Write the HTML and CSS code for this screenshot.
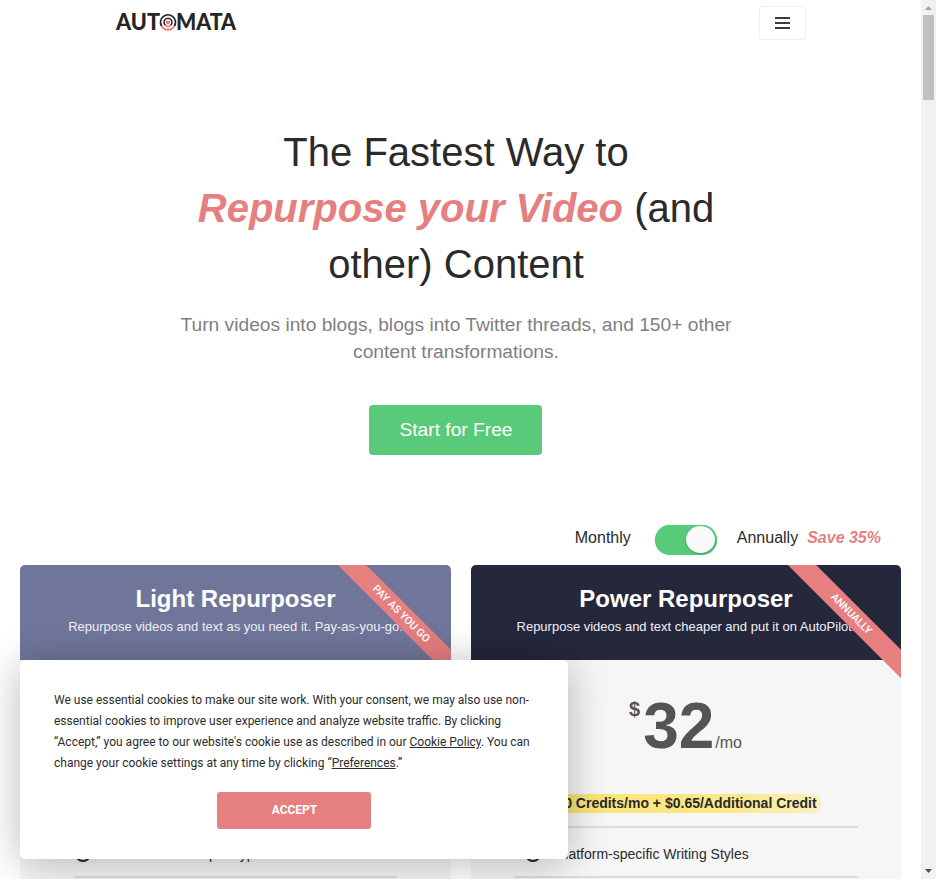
FILE: index.html
```html
<!DOCTYPE html>
<html lang="en">
<head>
<meta charset="utf-8">
<title>Automata</title>
<link rel="stylesheet" href="styles.css">
</head>
<body>
<div class="window">
  <div class="page">
    <header class="nav">
      <svg class="logo" width="130" height="36" viewBox="0 -6 130 36" aria-label="Automata">
        <text x="1" y="17.2" textLength="44" lengthAdjust="spacingAndGlyphs">AUT</text>
        <text x="61" y="17.2" textLength="60" lengthAdjust="spacingAndGlyphs">MATA</text>
        <g fill="none" stroke-width="1.9">
          <path d="M46.6 13A7.4 7.4 0 1 1 59.4 13" stroke="#252525"/>
          <path d="M46.6 13A7.4 7.4 0 0 0 59.4 13" stroke="#e57f80"/>
          <path d="M50.5 12.4A4 4 0 1 1 55.5 12.4" stroke="#252525" stroke-width="1.5"/>
          <path d="M50.5 12.4A4 4 0 0 0 55.5 12.4" stroke="#e57f80" stroke-width="1.5"/>
        </g>
        <circle cx="53" cy="9.3" r="2.1" fill="#e57f80"/>
      </svg>
      <button class="menu" aria-label="Menu"><span></span><span></span><span></span></button>
    </header>
    <section class="hero">
      <h1>The Fastest Way to<br><em>Repurpose your Video</em> (and<br>other) Content</h1>
      <p>Turn videos into blogs, blogs into Twitter threads, and 150+ other<br>content transformations.</p>
      <a class="cta">Start for Free</a>
    </section>
    <div class="billing">
      <span class="monthly">Monthly</span>
      <span class="switch"><span class="knob"></span></span>
      <span class="annually">Annually</span>
      <em>Save 35%</em>
    </div>
    <section class="plans">
      <article class="plan light">
        <div class="head"><h2>Light Repurposer</h2><p>Repurpose videos and text as you need it. Pay-as-you-go.</p></div>
        <div class="ribbon">PAY AS YOU GO</div>
        <div class="body">
          <div class="price"></div>
          <div class="credits"></div>
          <div class="feature"><svg width="16" height="16" viewBox="0 0 16 16"><circle cx="8" cy="8" r="7" fill="none" stroke="#252525" stroke-width="2"/><path d="M4.5 8l2.5 2.5 4.5-5" fill="none" stroke="#252525" stroke-width="2"/></svg>All Content Output Types</div>
        </div>
      </article>
      <article class="plan power">
        <div class="head"><h2>Power Repurposer</h2><p>Repurpose videos and text cheaper and put it on AutoPilot.</p></div>
        <div class="ribbon">ANNUALLY</div>
        <div class="body">
          <div class="price"><sup>$</sup><b>32</b><span>/mo</span></div>
          <div class="credits"><mark>50 Credits/mo + $0.65/Additional Credit</mark></div>
          <div class="feature"><svg width="16" height="16" viewBox="0 0 16 16"><circle cx="8" cy="8" r="7" fill="none" stroke="#252525" stroke-width="2"/><path d="M4.5 8l2.5 2.5 4.5-5" fill="none" stroke="#252525" stroke-width="2"/></svg>Platform-specific Writing Styles</div>
        </div>
      </article>
    </section>
  </div>
  <div class="scrollbar">
    <svg width="15" height="15" viewBox="0 0 15 15"><path d="M4 10L7.5 6L11 10Z" fill="#a3a3a3"/></svg>
    <div class="thumb"></div>
    <svg class="down" width="15" height="15" viewBox="0 0 15 15"><path d="M4 5L7.5 9L11 5Z" fill="#505050"/></svg>
  </div>
  <div class="cookie">
    <p>We use essential cookies to make our site work. With your consent, we may also use non-<br>essential cookies to improve user experience and analyze website traffic. By clicking<br>“Accept,” you agree to our website's cookie use as described in our <u>Cookie Policy</u>. You can<br>change your cookie settings at any time by clicking “<u>Preferences</u>.”</p>
    <button>ACCEPT</button>
  </div>
</div>
</body>
</html>
```

FILE: styles.css
```css
* { box-sizing: border-box; }
body { margin: 0; font-family: "Liberation Sans", Arial, sans-serif; color: #2a2a2a; background: #fff; }
h1, h2, p { margin: 0; font-weight: 400; }
.window { position: relative; display: flex; height: 879px; overflow: hidden; }
.page { flex: 1; min-width: 0; height: 879px; overflow: hidden; }

.nav { display: flex; justify-content: space-between; align-items: flex-start; height: 46px; padding: 6px 115px 0 115px; }
.logo { display: block; margin-top: 1px; }
.logo text { font: 900 22.3px Lato, sans-serif; fill: #252525; }
.menu { display: flex; flex-direction: column; align-items: center; justify-content: center; gap: 3px; width: 47px; height: 34px; padding: 0; border: 1px solid #f0f0f0; border-radius: 3px; background: #fff; }
.menu span { width: 15px; height: 2px; background: #3c3c3c; }

.hero { display: flex; flex-direction: column; align-items: center; padding: 78px 10px 0 0; text-align: center; }
h1 { padding-left: 1px; font-size: 40px; line-height: 56px; color: #2a2a2a; }
h1 em { color: #e57f80; font-weight: 700; }
.hero p { margin-top: 19px; padding-left: 1px; font-size: 19.2px; line-height: 27px; color: #7f7f7f; }
.cta { display: block; width: 173px; height: 50px; margin-top: 40px; padding-left: 1px; border-radius: 4px; background: #59ca7a; color: #fff; font-size: 19.2px; line-height: 50px; }

.billing { display: flex; justify-content: flex-end; align-items: center; height: 34px; margin-top: 68px; padding-right: 40px; font-size: 16px; }
.billing > span:not(.switch), .billing em { margin-top: -4px; }
.switch { display: flex; justify-content: flex-end; width: 62px; height: 30px; margin: 0 20px 0 24px; padding: 1px 2px 1px 1px; border-radius: 15px; background: #59ca7a; box-shadow: 0 0 1px #59ca7a; }
.knob { width: 29px; height: 27px; border-radius: 50%; background: #fafafa; box-shadow: 0 1px 2px rgba(0,0,0,.25); }
.billing em { margin-left: 9px; color: #e57f80; font-weight: 700; }

.plans { display: grid; grid-template-columns: 431px 430px; gap: 20px; margin: 8px 20px 0; }
.plan { position: relative; height: 330px; overflow: hidden; border-radius: 5px 5px 0 0; background: #f6f6f6; }
.head { height: 95px; padding-top: 20px; text-align: center; color: #fff; }
.light .head { background: #70769a; }
.power .head { background: #25273b; }
.head h2 { font-size: 24px; line-height: 28px; font-weight: 700; }
.head p { margin-top: 6px; font-size: 13px; line-height: 16px; color: #f1f1f6; }
.ribbon { position: absolute; top: 39px; right: -49.5px; width: 200px; height: 20px; background: #e57f80; color: #fff; font: 500 10.7px/20px Roboto, sans-serif; text-align: center; transform: rotate(45deg); }
.body { padding: 0 43px; }
.light .body { padding: 0 54px; }
.price { display: flex; justify-content: center; height: 116px; padding: 30px 1px 0 0; color: #545454; }
.price sup { margin: 8px 3px 0 0; font-size: 20px; line-height: 23px; font-weight: 700; }
.price b { font-size: 64px; line-height: 73px; }
.price span { margin: 44px 0 0 1px; font-size: 16px; line-height: 18px; }
.credits { height: 52px; padding: 17px 0 0 1px; border-bottom: 2px solid #dcdcdc; text-align: center; font-size: 14px; line-height: 20px; font-weight: 700; }
.credits mark { padding: 1px 4px 2px; border-radius: 8px; background: linear-gradient(90deg, #f8e473, #fbe98b 65%, #faf0be); color: #2a2a2a; }
.feature { display: flex; align-items: center; gap: 15px; height: 50px; padding: 4px 0 0 11px; border-bottom: 2px solid #dcdcdc; font-size: 14px; }
.light .feature { gap: 23px; padding-left: 1px; }

.scrollbar { display: flex; flex-direction: column; width: 15px; background: #f1f1f1; }
.scrollbar svg { display: block; }
.thumb { width: 11px; height: 85px; margin-left: 2px; background: #c1c1c1; }
.down { margin-top: auto; }

.cookie { position: absolute; left: 20px; bottom: 20px; width: 548px; height: 199px; padding: 30px 34px; border-radius: 5px; background: #fff; box-shadow: 0 4px 42px rgba(0,0,0,.28); font-family: Roboto, sans-serif; }
.cookie p { font-size: 12px; line-height: 21px; white-space: nowrap; color: #2c2c2c; }
.cookie button { display: block; width: 154px; height: 37px; margin: 18px auto 0; padding: 0 0 1px 1px; border: 0; border-radius: 3px; background: #e57f80; color: #fff; font: 700 12px Roboto, sans-serif; }
```
